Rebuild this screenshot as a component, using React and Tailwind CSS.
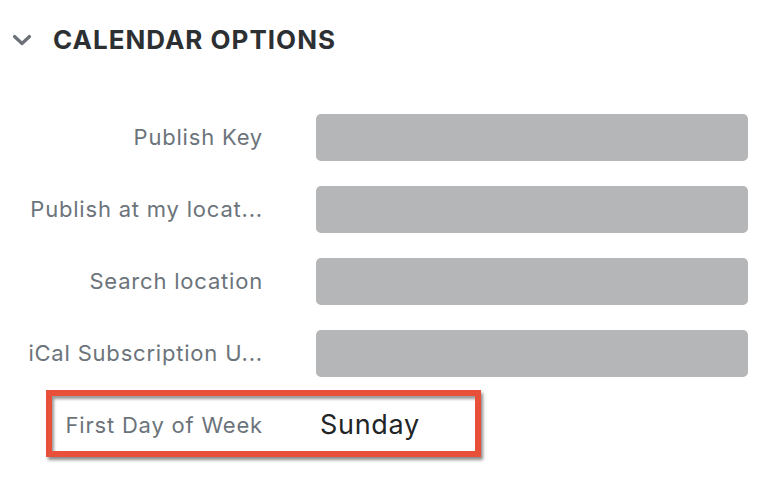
const ROWS = [
  { label: 'Publish Key' },
  { label: 'Publish at my locat...' },
  { label: 'Search location' },
  { label: 'iCal Subscription U...' },
]

function Chevron() {
  return (
    <svg className="w-[20px] h-[12px] text-[#6b7177]" viewBox="0 0 20 12" fill="none">
      <path d="M2.5 2.5l7.5 7 7.5-7" stroke="currentColor" strokeWidth="3.2" strokeLinecap="round" strokeLinejoin="round" />
    </svg>
  )
}

export default function App() {
  return (
    <div className="w-[768px] h-[482px] bg-white font-['Inter',sans-serif] overflow-hidden">
      {/* Section header */}
      <div className="flex items-center h-[80px] pl-[12px] pb-[1px]">
        <Chevron />
        <h2 className="ml-[21px] text-[26px] font-bold tracking-[1px] text-[#2d3033]">CALENDAR OPTIONS</h2>
      </div>

      {/* Fields */}
      <div className="grid grid-cols-[235px_1fr] gap-x-[53px] gap-y-[25px] pl-[28px] pr-[20px] pt-[34px]">
        {ROWS.map((row) => (
          <div key={row.label} className="contents">
            <div className="flex items-center justify-end h-[47px] min-w-0">
              <span className="whitespace-nowrap text-[22px] tracking-[0.8px] text-[#6c747b]">{row.label}</span>
            </div>
            <div className="h-[47px] rounded-[5px] bg-[#b5b6b8]" />
          </div>
        ))}

        <div className="flex items-center justify-end h-[42px] mt-[2px]">
          <span className="text-[22px] tracking-[0.8px] text-[#6c747b] whitespace-nowrap">First Day of Week</span>
        </div>
        <div className="relative flex items-center h-[42px] mt-[2px] pl-[4px]">
          <span className="text-[27px] tracking-[0.7px] text-[#222426]">Sunday</span>
          {/* annotation box */}
          <div className="absolute left-[-270px] top-[-14px] w-[435px] h-[67px] border-[6px] border-[#e8503a] shadow-[2px_3px_3px_rgba(0,0,0,0.45),inset_2px_3px_3px_rgba(0,0,0,0.4)]" />
        </div>
      </div>
    </div>
  )
}
